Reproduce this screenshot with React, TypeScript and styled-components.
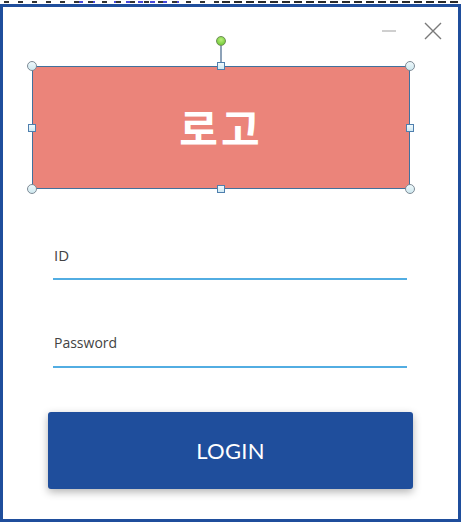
import styled, { createGlobalStyle } from 'styled-components';

const GlobalStyle = createGlobalStyle`
  html, body {
    margin: 0;
    padding: 0;
    background: #ffffff;
  }
  body {
    font-family: "Open Sans", "Noto Sans CJK KR", sans-serif;
  }
`;

const Page = styled.div`
  width: 466px;
  height: 526px;
  overflow: hidden;
  background: #ffffff;
`;

// bits of the window behind, cut off at the top of the screenshot
const BackStrip = styled.div`
  height: 4px;
  background:
    repeating-linear-gradient(90deg, transparent 0 4px, #333 4px 9px, transparent 9px 14px) 0 1px / 220px 2px no-repeat,
    repeating-linear-gradient(90deg, transparent 0 3px, #4848d8 3px 8px, transparent 8px 12px) 75px 1px / 120px 2px no-repeat,
    repeating-linear-gradient(90deg, transparent 0 2px, #2a2a2a 2px 10px, transparent 10px 12px) 220px 1px / 240px 2px no-repeat;
`;

const Window = styled.div`
  box-sizing: border-box;
  width: 461px;
  height: 518px;
  border: 3px solid #1f4e9c;
  background: #ffffff;
  display: flex;
  flex-direction: column;
`;

const TitleBar = styled.div`
  height: 59px;
  display: flex;
  justify-content: flex-end;
  align-items: flex-start;
  padding: 15px 16px 0 0;
  box-sizing: border-box;
  gap: 26px;
`;

const WinButton = styled.button`
  border: none;
  background: none;
  padding: 0;
  width: 18px;
  height: 18px;
  display: flex;
  align-items: center;
  justify-content: center;
  cursor: pointer;
`;

const ShapeWrap = styled.div`
  position: relative;
  margin-left: 29px;
  width: 378px;
  height: 123px;
`;

const LogoShape = styled.div`
  box-sizing: border-box;
  width: 100%;
  height: 100%;
  background: #eb847a;
  border: 1px solid #41719c;
  display: flex;
  align-items: center;
  justify-content: center;
  color: #ffffff;
  font-family: "Noto Sans CJK KR", sans-serif;
  font-weight: 700;
  font-size: 42px;
  letter-spacing: 3px;
  padding-bottom: 2px;
`;

const Handle = styled.span<{ $x: string; $y: string; $round?: boolean }>`
  position: absolute;
  left: ${(p) => p.$x};
  top: ${(p) => p.$y};
  box-sizing: border-box;
  width: ${(p) => (p.$round ? '10px' : '8px')};
  height: ${(p) => (p.$round ? '10px' : '8px')};
  transform: translate(-50%, -50%);
  border-radius: ${(p) => (p.$round ? '50%' : '0')};
  background: ${(p) =>
    p.$round ? 'linear-gradient(#eef8fb, #cfe8ef)' : 'linear-gradient(#f2fafd, #cfe9f3)'};
  border: 1px solid ${(p) => (p.$round ? '#7e8b96' : '#4f7fae')};
`;

// rotation handle: stem and green knob above the top middle handle
const Rotator = styled.span`
  position: absolute;
  left: 50%;
  bottom: 100%;
  transform: translateX(-50%);
  display: flex;
  flex-direction: column;
  align-items: center;
  padding-bottom: 4px;
`;

const RotateKnob = styled.span`
  width: 10px;
  height: 10px;
  box-sizing: border-box;
  border-radius: 50%;
  background: radial-gradient(circle at 50% 35%, #b8f07a, #62c02a);
  border: 1px solid #6d8d55;
`;

const RotateStem = styled.span`
  width: 2px;
  height: 16px;
  background: #8da2b8;
`;

const Form = styled.div`
  margin: 56px 0 0 50px;
  width: 354px;
  display: flex;
  flex-direction: column;
  gap: 53px;
`;

const Field = styled.label<{ $size: number }>`
  display: block;
  padding: 0 0 13px 1px;
  border-bottom: 2px solid #52ade2;
  font-size: ${(p) => p.$size}px;
  line-height: 20px;
  color: #434343;
`;

const LoginButton = styled.button`
  margin: 44px 0 0 45px;
  width: 365px;
  height: 77px;
  border: none;
  border-radius: 3px;
  background: #1f4e9c;
  color: #ffffff;
  font-family: "Lato", "Open Sans", sans-serif;
  font-size: 22px;
  letter-spacing: 0.3px;
  box-shadow: 0 3px 9px rgba(0, 0, 0, 0.3);
  cursor: pointer;
`;

const App = () => {
  return (
    <Page>
      <GlobalStyle />
      <BackStrip />
      <Window>
        <TitleBar>
          <WinButton aria-label="minimize">
            <svg width="16" height="4" viewBox="0 0 16 4">
              <line x1="1" y1="2" x2="15" y2="2" stroke="#cfcfcf" strokeWidth="2" />
            </svg>
          </WinButton>
          <WinButton aria-label="close">
            <svg width="18" height="18" viewBox="0 0 18 18">
              <path d="M1 1 L17 17 M17 1 L1 17" stroke="#7a7a7a" strokeWidth="1.4" fill="none" />
            </svg>
          </WinButton>
        </TitleBar>

        <ShapeWrap>
          <LogoShape>로고</LogoShape>
          <Rotator>
            <RotateKnob />
            <RotateStem />
          </Rotator>
          <Handle $x="0%" $y="0%" $round />
          <Handle $x="50%" $y="0%" />
          <Handle $x="100%" $y="0%" $round />
          <Handle $x="0%" $y="50%" />
          <Handle $x="100%" $y="50%" />
          <Handle $x="0%" $y="100%" $round />
          <Handle $x="50%" $y="100%" />
          <Handle $x="100%" $y="100%" $round />
        </ShapeWrap>

        <Form>
          <Field $size={15}>ID</Field>
          <Field $size={14}>Password</Field>
        </Form>

        <LoginButton>LOGIN</LoginButton>
      </Window>
    </Page>
  );
};

export default App;
